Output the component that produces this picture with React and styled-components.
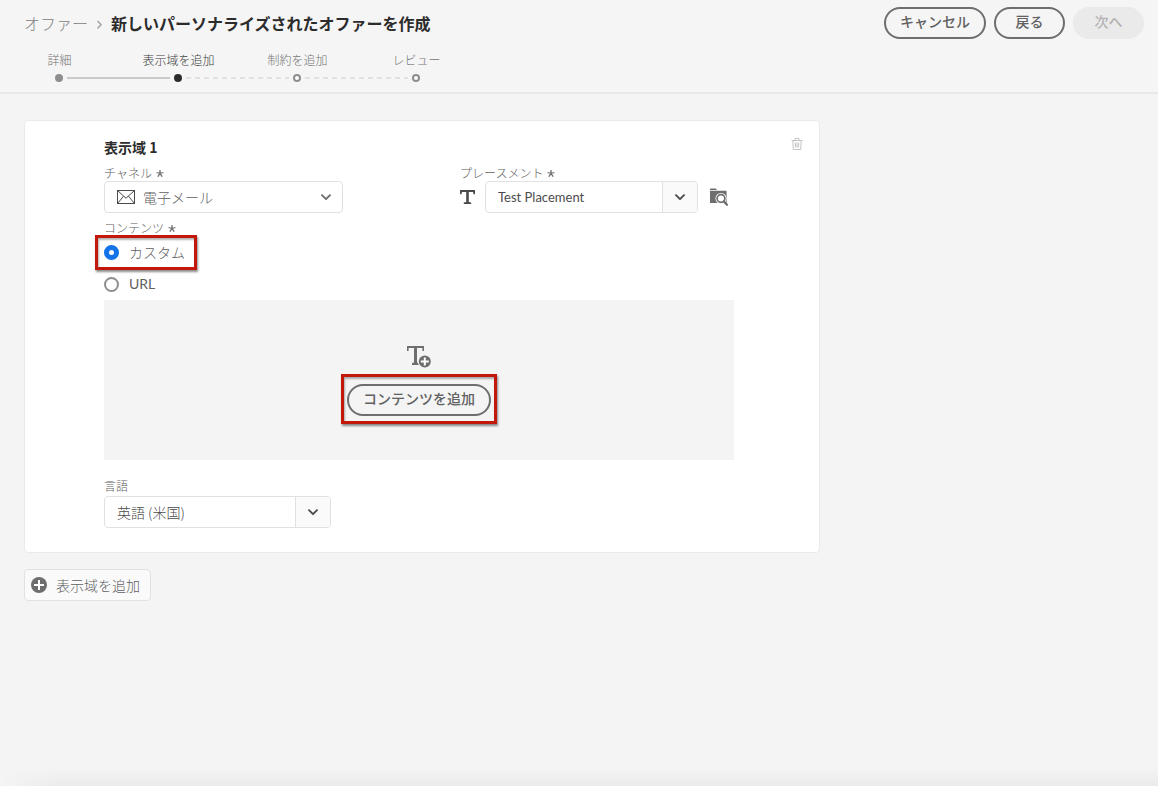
import React from 'react';
import styled, { createGlobalStyle, css } from 'styled-components';

const GlobalStyle = createGlobalStyle`
  *, *::before, *::after { box-sizing: border-box; }
  body {
    margin: 0;
    background: #f4f4f4;
    color: #606060;
    font-family: "Noto Sans CJK JP", "Noto Sans", sans-serif;
    font-size: 14px;
    line-height: 20px;
  }
  button, input, select { font: inherit; color: inherit; }
  h1, h2, ol { margin: 0; padding: 0; }
  svg { display: block; flex: none; }
`;

const latinFont = css`
  font-family: Lato, "Noto Sans CJK JP", sans-serif;
  font-weight: 400;
`;

const Page = styled.div`
  display: flex;
  flex-direction: column;
  min-height: 100vh;
`;

const Header = styled.header`
  display: flex;
  justify-content: space-between;
  align-items: flex-start;
  padding: 7px 14px 10px 0;
  background: #f5f5f5;
  border-bottom: 2px solid #e8e8e8;
`;

const Breadcrumb = styled.nav`
  display: flex;
  align-items: center;
  gap: 8px;
  height: 32px;
  padding-left: 24px;
  font-size: 16px;
  color: #808080;
`;

const Crumb = styled.a`
  color: inherit;
  font-weight: 300;
  text-decoration: none;
`;

const PageTitle = styled.h1`
  font-size: 16px;
  font-weight: 700;
  color: #2c2c2c;
`;

const Steps = styled.ol`
  display: flex;
  margin-top: 12px;
  list-style: none;
`;

const Step = styled.li`
  width: 119px;
  font-size: 12px;
  line-height: 18px;
  font-weight: 300;
  text-align: center;
  color: ${(p) => (p.$state === 'current' ? '#3c3c3c' : '#747474')};
`;

const StepTrack = styled.div`
  display: flex;
  align-items: center;
  gap: 4px;
  width: 100%;
  margin-top: 5px;
  margin-left: calc(50% - 5px);
`;

const dotStyles = {
  done: css`background: #8e8e8e; border-color: #8e8e8e;`,
  current: css`background: #2c2c2c; border-color: #2c2c2c;`,
  todo: css`background: #fff; border-color: #8e8e8e;`,
};

const Dot = styled.span`
  width: 8px;
  height: 8px;
  border: 2px solid;
  border-radius: 50%;
  ${(p) => dotStyles[p.$state]}
`;

const Connector = styled.span`
  flex: 1;
  height: 2px;
  margin-right: 4px;
  background: ${(p) =>
    p.$solid ? '#cacaca' : 'repeating-linear-gradient(90deg, #e1e1e1 0 5px, transparent 5px 9px)'};
`;

const Actions = styled.div`
  display: flex;
  gap: 8px;
`;

const PillButton = styled.button`
  min-width: 71px;
  height: 32px;
  padding: 0 14px 4px;
  border: 2px solid #6e6e6e;
  border-radius: 16px;
  background: transparent;
  font-weight: 500;
  line-height: 20px;
  white-space: nowrap;
  &:disabled {
    border-color: #eaeaea;
    background: #eaeaea;
    color: #b3b3b3;
  }
`;

const Main = styled.main`
  display: flex;
  flex-direction: column;
  align-items: flex-start;
  gap: 16px;
  padding: 26px 24px 40px;
`;

const Card = styled.section`
  display: flex;
  justify-content: space-between;
  align-items: flex-start;
  width: 100%;
  max-width: 796px;
  padding: 16px 16px 24px 79px;
  border: 1px solid #eaeaea;
  border-radius: 4px;
  background: #fff;
`;

const CardBody = styled.div`
  flex: 1;
  max-width: 630px;
`;

const CardTitle = styled.h2`
  margin-bottom: 8px;
  font-size: 14px;
  line-height: 20px;
  font-weight: 700;
  color: #2c2c2c;
`;

const IconButton = styled.button`
  padding: 0;
  border: 0;
  background: none;
  color: ${(p) => (p.$faint ? '#c4c4c4' : '#6e6e6e')};
`;

const FieldRow = styled.div`
  display: grid;
  grid-template-columns: 356px 1fr;
`;

const Field = styled.div`
  display: flex;
  flex-direction: column;
  align-items: flex-start;
  gap: ${(p) => (p.$spaced ? '2px' : '0')};
`;

const labelText = css`
  display: flex;
  align-items: center;
  gap: 4px;
  padding: 0;
  font-size: 12px;
  line-height: 16px;
  font-weight: 300;
  color: #606060;
`;

const Label = styled.label`${labelText}`;
const Legend = styled.legend`${labelText}`;

const SelectBox = styled.div`
  display: grid;
  grid-template-columns: 1fr;
  align-items: center;
  width: 239px;
  height: 32px;
  & > * { grid-area: 1 / 1; }
  & > svg { pointer-events: none; z-index: 1; }
  & > svg:first-child { margin-left: 13px; }
  & > svg:last-child { justify-self: end; margin-right: 12px; }
`;

const Select = styled.select`
  width: 100%;
  height: 32px;
  padding: 0 36px 0 38px;
  border: 1px solid #e1e1e1;
  border-radius: 4px;
  background: #fff;
  appearance: none;
  font-weight: 300;
`;

const ControlRow = styled.div`
  display: flex;
  align-items: center;
`;

const ComboBox = styled.div`
  display: flex;
  width: ${(p) => p.$width};
  height: 32px;
  border: 1px solid #e1e1e1;
  border-radius: 4px;
  background: #fff;
  overflow: hidden;
`;

const ComboInput = styled.input`
  flex: 1;
  min-width: 0;
  padding: 0 12px;
  border: 0;
  background: transparent;
  font-size: 14px;
  font-weight: 300;
  color: #4b4b4b;
  ${(p) => p.$latin && css`${latinFont} font-size: 13px;`}
`;

const ComboButton = styled.button`
  display: flex;
  align-items: center;
  justify-content: center;
  width: 35px;
  padding: 0;
  border: 0;
  border-left: 1px solid #e1e1e1;
  background: #fafafa;
  color: #4b4b4b;
`;

const PlacementRow = styled(ControlRow)`
  & > svg { margin-right: 10px; }
  & > button { margin-left: 12px; }
`;

const RadioGroup = styled.fieldset`
  display: flex;
  flex-direction: column;
  align-items: flex-start;
  margin: 7px 0 0;
  padding: 0;
  border: 0;
`;

const highlight = css`
  position: relative;
  &::after {
    content: "";
    position: absolute;
    inset: ${(p) => p.$inset};
    border: 3px solid #c4170c;
    box-shadow: 1px 2px 2px rgba(0, 0, 0, 0.45), inset 1px 2px 2px rgba(0, 0, 0, 0.3);
    pointer-events: none;
  }
`;

const RadioLabel = styled.label`
  display: flex;
  align-items: center;
  gap: 10px;
  height: 32px;
  font-size: 14px;
  font-weight: 300;
  ${(p) => p.$latin && latinFont}
  ${(p) => p.$inset && highlight}
`;

const Radio = styled.input`
  appearance: none;
  width: 15px;
  height: 15px;
  margin: 0;
  border: 2px solid #8e8e8e;
  border-radius: 50%;
  background: #fff;
  &:checked { border: 5px solid #1473e6; }
`;

const DropZone = styled.div`
  display: flex;
  flex-direction: column;
  align-items: center;
  gap: 16px;
  margin-bottom: 18px;
  padding: 46px 0 44px;
  background: #f4f4f4;
`;

const Highlighted = styled.div`${highlight}`;

const AddButton = styled.button`
  display: flex;
  align-items: center;
  gap: 9px;
  height: 32px;
  padding: 0 10px 0 6px;
  border: 1px solid #e1e1e1;
  border-radius: 4px;
  background: #fafafa;
  font-weight: 300;
`;

const BottomShade = styled.div`
  height: 18px;
  margin-top: auto;
  background: linear-gradient(rgba(0, 0, 0, 0), rgba(0, 0, 0, 0.035));
  mask-image: linear-gradient(90deg, transparent, #000 60px);
`;

const Asterisk = () => (
  <svg width="8" height="8" viewBox="0 0 8 8" stroke="#6e6e6e" strokeWidth="1.3" aria-hidden="true">
    <path d="M4 4.500V1M4 4.500l3.400-1M4 4.500l2.200 3.200M4 4.500L1.800 7.700M4 4.500L.6 3.500" />
  </svg>
);

const Chevron = ({ color = '#6e6e6e' }) => (
  <svg width="10" height="10" viewBox="0 0 10 10" fill="none" stroke={color} strokeWidth="1.900" strokeLinecap="round" strokeLinejoin="round" aria-hidden="true">
    <path d="M1 3.200l4 4 4-4" />
  </svg>
);

const CrumbArrow = () => (
  <svg width="7" height="14" viewBox="0 0 7 14" fill="none" stroke="#a5a5a5" strokeWidth="1.500" aria-hidden="true">
    <path d="M1.500 5L5 8.700 1.500 12.500" />
  </svg>
);

const MailIcon = () => (
  <svg width="18" height="16" viewBox="0 0 18 16" fill="none" stroke="#4b4b4b" aria-hidden="true">
    <rect x=".5" y="1.500" width="17" height="13" />
    <path d="M.8 1.800L9 9.200l8.200-7.400M.8 14.200l5.700-7M17.200 14.200l-5.700-7" />
  </svg>
);

const TextIcon = () => (
  <svg width="15" height="14" viewBox="0 0 15 14" fill="#4b4b4b" aria-hidden="true">
    <path d="M0 0h15v4.200h-1.400L13 2H8.800v10l2.400.6V14H3.800v-1.400l2.400-.6V2H2l-.6 2.200H0z" />
  </svg>
);

const TextAddIcon = () => (
  <svg width="24" height="22" viewBox="0 0 24 22" aria-hidden="true">
    <path fill="#6e6e6e" d="M0 0h17v5h-1.600V2H10v14.500l2 .6V19H5v-1.900l2-.6V2H1.600v3H0z" />
    <circle cx="17.800" cy="15.500" r="7" fill="#f4f4f4" />
    <circle cx="17.800" cy="15.500" r="6" fill="#6e6e6e" />
    <path d="M17.800 11.500v8M13.800 15.500h8" stroke="#fff" strokeWidth="2" />
  </svg>
);

const FolderSearchIcon = () => (
  <svg width="18" height="18" viewBox="0 0 18 18" aria-hidden="true">
    <path fill="#6e6e6e" d="M0 1.200Q0 .5.700.5h5L7 2H0zM0 2.800h16q.6 0 .6.600V15H0z" />
    <circle cx="11" cy="10.500" r="5.500" fill="#fff" />
    <circle cx="11" cy="10.500" r="3.900" fill="#fff" stroke="#6e6e6e" strokeWidth="1.700" />
    <path d="M12.500 15h4.500v2h-4z" fill="#fff" />
    <path d="M13.800 13.400l3.200 3.400" stroke="#6e6e6e" strokeWidth="2.200" strokeLinecap="round" />
  </svg>
);

const TrashIcon = () => (
  <svg width="12" height="14" viewBox="0 0 12 14" fill="none" stroke="currentColor" aria-hidden="true">
    <path d="M.5 3.500h11M4 3.500v-2h4v2M1.800 3.500l.5 9h7.400l.5-9M4.300 5.500l.2 5M6 5.500v5M7.700 5.500l-.2 5" />
  </svg>
);

const AddCircleIcon = () => (
  <svg width="16" height="16" viewBox="0 0 16 16" aria-hidden="true">
    <circle cx="8" cy="8" r="8" fill="#6e6e6e" />
    <path d="M8 3v10M3 8h10" stroke="#fff" strokeWidth="2" />
  </svg>
);

const STEPS = [
  { label: '詳細', state: 'done' },
  { label: '表示域を追加', state: 'current' },
  { label: '制約を追加', state: 'todo' },
  { label: 'レビュー', state: 'todo' },
];

export default function App() {
  return (
    <>
      <GlobalStyle />
      <Page>
        <Header>
          <div>
            <Breadcrumb>
              <Crumb href="#offers">オファー</Crumb>
              <CrumbArrow />
              <PageTitle>新しいパーソナライズされたオファーを作成</PageTitle>
            </Breadcrumb>
            <Steps>
              {STEPS.map((step, i) => (
                <Step key={step.label} $state={step.state}>
                  {step.label}
                  <StepTrack>
                    <Dot $state={step.state} />
                    {i < STEPS.length - 1 && <Connector $solid={step.state === 'done'} />}
                  </StepTrack>
                </Step>
              ))}
            </Steps>
          </div>
          <Actions>
            <PillButton type="button">キャンセル</PillButton>
            <PillButton type="button">戻る</PillButton>
            <PillButton type="button" disabled>次へ</PillButton>
          </Actions>
        </Header>

        <Main>
          <Card>
            <CardBody>
              <CardTitle>表示域 1</CardTitle>
              <FieldRow>
                <Field>
                  <Label htmlFor="channel">チャネル<Asterisk /></Label>
                  <SelectBox>
                    <MailIcon />
                    <Select id="channel" defaultValue="email">
                      <option value="email">電子メール</option>
                    </Select>
                    <Chevron />
                  </SelectBox>
                </Field>
                <Field>
                  <Label htmlFor="placement">プレースメント<Asterisk /></Label>
                  <PlacementRow>
                    <TextIcon />
                    <ComboBox $width="213px">
                      <ComboInput id="placement" $latin defaultValue="Test Placement" />
                      <ComboButton type="button" aria-label="プレースメントを表示"><Chevron color="#4b4b4b" /></ComboButton>
                    </ComboBox>
                    <IconButton type="button" aria-label="プレースメントを検索"><FolderSearchIcon /></IconButton>
                  </PlacementRow>
                </Field>
              </FieldRow>
              <RadioGroup>
                <Legend>コンテンツ<Asterisk /></Legend>
                <RadioLabel $inset="-1px -12px -2px -9px">
                  <Radio type="radio" name="content" defaultChecked />カスタム
                </RadioLabel>
                <RadioLabel $latin>
                  <Radio type="radio" name="content" />URL
                </RadioLabel>
              </RadioGroup>
              <DropZone>
                <TextAddIcon />
                <Highlighted $inset="-10px -6px -8px -6px">
                  <PillButton type="button">コンテンツを追加</PillButton>
                </Highlighted>
              </DropZone>
              <Field $spaced>
                <Label htmlFor="language">言語</Label>
                <ComboBox $width="227px">
                  <ComboInput id="language" defaultValue="英語 (米国)" />
                  <ComboButton type="button" aria-label="言語を表示"><Chevron color="#4b4b4b" /></ComboButton>
                </ComboBox>
              </Field>
            </CardBody>
            <IconButton type="button" aria-label="削除" $faint><TrashIcon /></IconButton>
          </Card>
          <AddButton type="button"><AddCircleIcon />表示域を追加</AddButton>
        </Main>
        <BottomShade />
      </Page>
    </>
  );
}
